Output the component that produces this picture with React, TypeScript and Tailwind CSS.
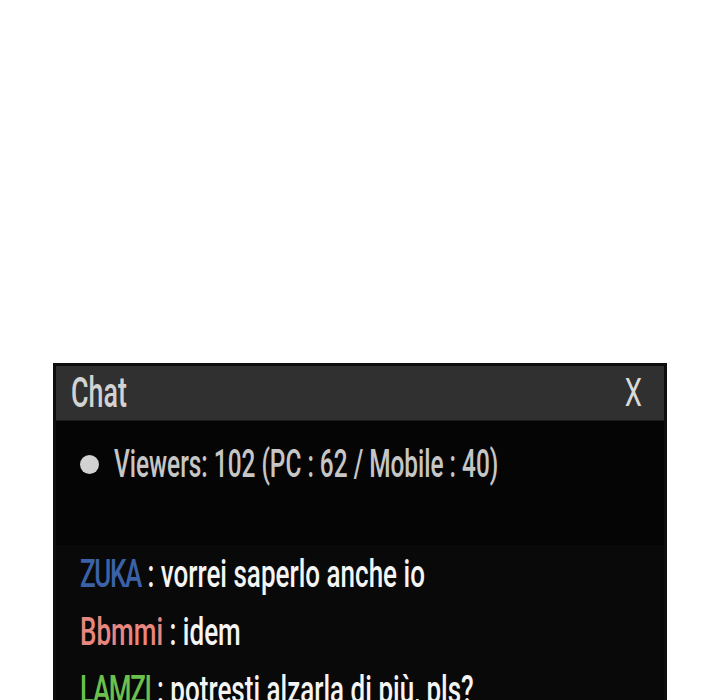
import React from "react";

const font = { fontFamily: 'Roboto, "Liberation Sans", Arial, sans-serif' };

function Msg({ name, color, text }: { name: string; color: string; text: string }) {
  return (
    <div className="h-[58px] leading-[58px] text-[38px] font-medium whitespace-nowrap">
      <span className="inline-block origin-left scale-x-[0.685]">
        <span className={color}>{name}</span>
        <span className="text-[#f4f4f4]"> : {text}</span>
      </span>
    </div>
  );
}

export default function App() {
  return (
    <div className="w-[720px] h-[700px] bg-white overflow-hidden" style={font}>
      <div className="pt-[363px] pl-[53px]">
        <div className="w-[614px] h-[400px] border-[3px] border-[#0e0e0e] bg-[#050505]">
          <div className="h-[55px] bg-[#303030] border-b border-[#1c1c1c] flex items-center justify-between pl-[15px] pr-[22px]">
            <span className="text-[42px] leading-none font-medium text-[#d2d2d2] inline-block origin-left scale-x-[0.64]">Chat</span>
            <span className="text-[38px] leading-none text-[#dadada] inline-block origin-right scale-x-[0.72]">X</span>
          </div>
          <div className="pt-[14px] pl-[24px]">
            <div className="h-[58px] leading-[58px] text-[39px] font-medium flex items-center whitespace-nowrap">
              <span className="w-[19px] h-[19px] rounded-full bg-[#d2d2d2] shrink-0 mr-[15px]" />
              <span className="inline-block origin-left scale-x-[0.625] text-[#c6c6c6]">Viewers: 102 (PC : 62 / Mobile : 40)</span>
            </div>
          </div>
          <div className="mt-[52px] pl-[24px] bg-[#090909]">
            <Msg name="ZUKA" color="text-[#3b62a8] tracking-[-2px]" text="vorrei saperlo anche io" />
            <Msg name="Bbmmi" color="text-[#e8877f]" text="idem" />
            <Msg name="LAMZI" color="text-[#6cc04e] tracking-[-2px]" text="potresti alzarla di più, pls?" />
          </div>
        </div>
      </div>
    </div>
  );
}
